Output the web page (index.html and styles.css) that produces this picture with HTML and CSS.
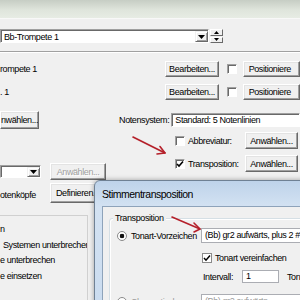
FILE: index.html
```html
<!DOCTYPE html>
<html lang="de">
<head>
    <meta charset="UTF-8">
    <title>Stimmentransposition</title>
    <link rel="stylesheet" href="styles.css">
</head>
<body>
    <div class="caption"></div>

    <!-- Stimme -->
    <div class="part-row">
        <div class="combo combo-part">
            <span class="combo-text">Bb-Trompete 1</span>
            <span class="drop-btn"><svg width="7" height="4" viewBox="0 0 7 4"><polygon points="0,0 7,0 3.5,4" fill="#000"/></svg></span>
        </div>
        <div class="spin">
            <span class="spin-btn"><svg width="5" height="3" viewBox="0 0 5 3"><polygon points="0,3 5,3 2.5,0" fill="#000"/></svg></span>
            <span class="spin-btn"><svg width="5" height="3" viewBox="0 0 5 3"><polygon points="0,0 5,0 2.5,3" fill="#000"/></svg></span>
        </div>
    </div>
    <div class="groove"></div>

    <div class="staff-row">
        <span class="name">rompete 1</span>
        <span class="btn btn-edit">Bearbeiten...</span>
        <span class="check check-gap"></span>
        <span class="btn btn-pos">Positioniere</span>
    </div>
    <div class="staff-row second">
        <span class="name">. 1</span>
        <span class="btn btn-edit">Bearbeiten...</span>
        <span class="check check-gap"></span>
        <span class="btn btn-pos">Positioniere</span>
    </div>

    <div class="system-row">
        <span class="btn btn-cut">nwählen...</span>
        <span class="system-label">Notensystem:</span>
        <span class="field">Standard: 5 Notenlinien</span>
    </div>

    <div class="lower">
        <div class="lower-left">
            <div class="pick-row">
                <div class="combo combo-small">
                    <span class="combo-text"></span>
                    <span class="drop-btn"><svg width="7" height="4" viewBox="0 0 7 4"><polygon points="0,0 7,0 3.5,4" fill="#000"/></svg></span>
                </div>
                <span class="btn btn-disabled">Anwählen...</span>
            </div>
            <div class="heads-row">
                <span class="heads-label">otenköpfe</span>
                <span class="btn btn-define">Definieren...</span>
            </div>
            <div class="options">
                <div>n</div>
                <div class="indent">Systemen unterbrechen</div>
                <div>e unterbrechen</div>
                <div>e einsetzen</div>
            </div>
        </div>
        <div class="lower-right">
            <div class="flag-row">
                <span class="check"></span>
                <span class="flag-label">Abbreviatur:</span>
                <span class="btn btn-choose">Anwählen...</span>
            </div>
            <div class="flag-row second">
                <span class="check"><svg width="8" height="8" viewBox="0 0 8 8"><path d="M1 4 L3 6 L7 1.5" fill="none" stroke="#000" stroke-width="1.6"/></svg></span>
                <span class="flag-label">Transposition:</span>
                <span class="btn btn-choose">Anwählen...</span>
            </div>
        </div>
    </div>

    <!-- Dialog -->
    <div class="dialog">
        <div class="dialog-title">Stimmentransposition</div>
        <div class="dialog-body">
            <div class="group">
                <span class="group-title">Transposition</span>
                <div class="mode-row">
                    <span class="radio on"></span>
                    <span class="mode-label">Tonart-Vorzeichen</span>
                    <span class="select">(Bb) gr2 aufwärts, plus 2 #</span>
                </div>
                <div class="simplify-row">
                    <span class="box"><svg width="8" height="8" viewBox="0 0 8 8"><path d="M1 4 L3 6.2 L7 1.5" fill="none" stroke="#000" stroke-width="1.5"/></svg></span>
                    <span class="simplify-label">Tonart vereinfachen</span>
                </div>
                <div class="interval-row">
                    <span class="interval-label">Intervall:</span>
                    <span class="input">1</span>
                    <span class="tone-label">Tonart</span>
                </div>
                <div class="mode-row chroma-row">
                    <span class="radio"></span>
                    <span class="mode-label dim">Chromatisch</span>
                    <span class="select dim">(Bb) gr2 aufwärts</span>
                </div>
            </div>
        </div>
    </div>

    <!-- Markierungen -->
    <svg class="marks" width="300" height="300" viewBox="0 0 300 300">
        <g fill="none" stroke="#b5202a" stroke-width="1.6" stroke-linecap="round" stroke-linejoin="round">
            <path d="M133 137 L165 153"/>
            <path d="M160 146.5 L165 153 L157 154"/>
            <path d="M172 217 L200 229"/>
            <path d="M194 223 L200 229 L194 232"/>
        </g>
    </svg>
</body>
</html>
```

FILE: styles.css
```css
* {
    box-sizing: border-box;
}
body {
    margin: 0;
    width: 300px;
    height: 300px;
    overflow: hidden;
    position: relative;
    background: #f0f0f0;
    font-family: "Liberation Sans", Arial, sans-serif;
    font-size: 9px;
    letter-spacing: -0.4px;
    color: #000;
    white-space: nowrap;
}
.caption {
    height: 19px;
    background: linear-gradient(to bottom, #c6cdc4, #dfe5dc 10px, #e7ece4);
    border-bottom: 1px solid #f8f8f8;
}

/* klassische Steuerelemente */
.btn {
    display: flex;
    align-items: center;
    justify-content: center;
    height: 16px;
    background: #f0f0f0;
    border: 1px solid;
    border-color: #fff #696969 #696969 #fff;
    box-shadow: inset -1px -1px #a0a0a0, inset 1px 1px #e3e3e3;
    overflow: hidden;
}
.check {
    display: flex;
    align-items: center;
    justify-content: center;
    width: 10px;
    height: 10px;
    flex: none;
    background: #fff;
    border: 1px solid;
    border-color: #a0a0a0 #fff #fff #a0a0a0;
    box-shadow: inset 1px 1px #696969;
}
.combo {
    display: flex;
    align-items: center;
    background: #fff;
    border: 1px solid;
    border-color: #a0a0a0 #fff #fff #a0a0a0;
    box-shadow: inset 1px 1px #696969;
    padding: 1px 0 0 1px;
}
.combo-text {
    flex: 1;
    padding-left: 2px;
}
.drop-btn {
    display: flex;
    align-items: center;
    justify-content: center;
    width: 13px;
    height: 100%;
    background: #f0f0f0;
    border: 1px solid;
    border-color: #f0f0f0 #696969 #696969 #f0f0f0;
    box-shadow: inset 1px 1px #fff, inset -1px -1px #a0a0a0;
}

.part-row {
    display: flex;
    height: 14px;
    margin-top: 10px;
}
.combo-part {
    width: 209px;
    height: 14px;
}
.spin {
    display: flex;
    flex-direction: column;
    width: 13px;
    height: 15px;
    margin-left: 1px;
}
.spin-btn {
    display: flex;
    align-items: center;
    justify-content: center;
    height: 7px;
    margin-bottom: 1px;
    border: 1px solid;
    border-color: #fff #696969 #696969 #fff;
    background: #f0f0f0;
}
.groove {
    margin-top: 8px;
    border-top: 1px solid #a0a0a0;
    border-bottom: 1px solid #fff;
}

.staff-row {
    display: flex;
    align-items: center;
    height: 16px;
    margin-top: 8px;
}
.staff-row.second {
    margin-top: 7px;
}
.name {
    width: 174px;
}
.btn-edit {
    width: 56px;
}
.check-gap {
    margin-left: 8px;
}
.btn-pos {
    width: 60px;
    margin-left: 6px;
    justify-content: flex-start;
    padding-left: 5px;
}

.system-row {
    display: flex;
    align-items: center;
    height: 18px;
    margin-top: 11px;
}
.btn-cut {
    width: 39px;
    height: 18px;
    justify-content: flex-start;
    padding-left: 0;
}
.system-label {
    width: 134px;
    text-align: right;
    padding-right: 2px;
}
.field {
    width: 130px;
    height: 14px;
    line-height: 12px;
    padding-left: 3px;
    background: #fff;
    border: 1px solid;
    border-color: #a0a0a0 #fff #fff #a0a0a0;
    box-shadow: inset 1px 1px #696969;
}

.lower {
    display: flex;
}
.lower-left {
    width: 175px;
}
.pick-row {
    display: flex;
    align-items: center;
    height: 17px;
    margin-top: 34px;
}
.combo-small {
    width: 41px;
    height: 13px;
}
.btn-disabled {
    width: 56px;
    height: 17px;
    margin-left: 9px;
    color: #a0a0a0;
    text-shadow: 1px 1px #fff;
}
.heads-row {
    display: flex;
    align-items: center;
    height: 20px;
    margin-top: 3px;
}
.heads-label {
    width: 50px;
    padding-top: 4px;
}
.btn-define {
    width: 56px;
    height: 20px;
    justify-content: flex-start;
    padding-left: 5px;
}
.options {
    width: 88px;
    height: 100px;
    margin-top: 12px;
    padding-top: 6px;
    line-height: 15.5px;
    border-top: 1px solid #d0d0d0;
    border-right: 1px solid #d0d0d0;
    overflow: hidden;
}
.options .indent {
    padding-left: 3px;
}

.lower-right {
    display: flex;
    flex-direction: column;
}
.flag-row {
    display: flex;
    align-items: center;
    height: 17px;
    margin-top: 3px;
}
.flag-row.second {
    margin-top: 6px;
}
.flag-label {
    width: 57px;
    margin-left: 3px;
}
.btn-choose {
    width: 53px;
    height: 17px;
}

/* Dialog */
.dialog {
    position: absolute;
    left: 94px;
    top: 180px;
    width: 230px;
    height: 140px;
    padding-left: 7px;
    border: 1px solid #6f8194;
    border-radius: 6px 0 0 0;
    background: linear-gradient(to bottom, #bed3ea, #d3e2f2 26px, #c9dbef);
    box-shadow: 0 0 5px rgba(0, 0, 0, 0.35);
}
.dialog-title {
    height: 25px;
    line-height: 26px;
    font-size: 10.5px;
    letter-spacing: -0.5px;
}
.dialog-body {
    height: 200px;
    padding: 11px 0 0 6px;
    background: #f0f0f0;
    border: 1px solid #8ea3ba;
}
.group {
    height: 200px;
    border: 1px solid #d5dfe5;
    border-radius: 3px;
    box-shadow: inset 1px 1px #fff;
}
.group-title {
    display: block;
    width: max-content;
    margin: -7px 0 0 3px;
    padding: 0 2px;
    line-height: 13px;
    background: #f0f0f0;
}
.mode-row {
    display: flex;
    align-items: center;
    height: 15px;
    margin-top: 3px;
    padding-left: 7px;
}
.radio {
    width: 10px;
    height: 10px;
    flex: none;
    border: 1px solid #8a8a8a;
    border-radius: 50%;
    background: #fff;
}
.radio.on {
    background: radial-gradient(circle, #111 0 2px, #fff 2.6px);
}
.mode-label {
    width: 70px;
    margin-left: 4px;
}
.select {
    width: 120px;
    height: 15px;
    line-height: 13px;
    padding-left: 3px;
    background: #fff;
    border: 1px solid #abadb3;
}
.dim {
    color: #9a9a9a;
}
.simplify-row {
    display: flex;
    align-items: center;
    height: 13px;
    margin-top: 8px;
    padding-left: 92px;
}
.box {
    display: flex;
    align-items: center;
    justify-content: center;
    width: 10px;
    height: 10px;
    border: 1px solid #8a8a8a;
    background: #fff;
}
.simplify-label {
    margin-left: 3px;
}
.interval-row {
    display: flex;
    align-items: center;
    height: 13px;
    margin-top: 6px;
    padding-left: 93px;
}
.interval-label {
    width: 39px;
}
.input {
    width: 37px;
    height: 13px;
    line-height: 11px;
    padding-left: 3px;
    background: #fff;
    border: 1px solid #abadb3;
}
.tone-label {
    margin-left: 8px;
}
.chroma-row {
    margin-top: 11px;
}

.marks {
    position: absolute;
    left: 0;
    top: 0;
    pointer-events: none;
}
```
